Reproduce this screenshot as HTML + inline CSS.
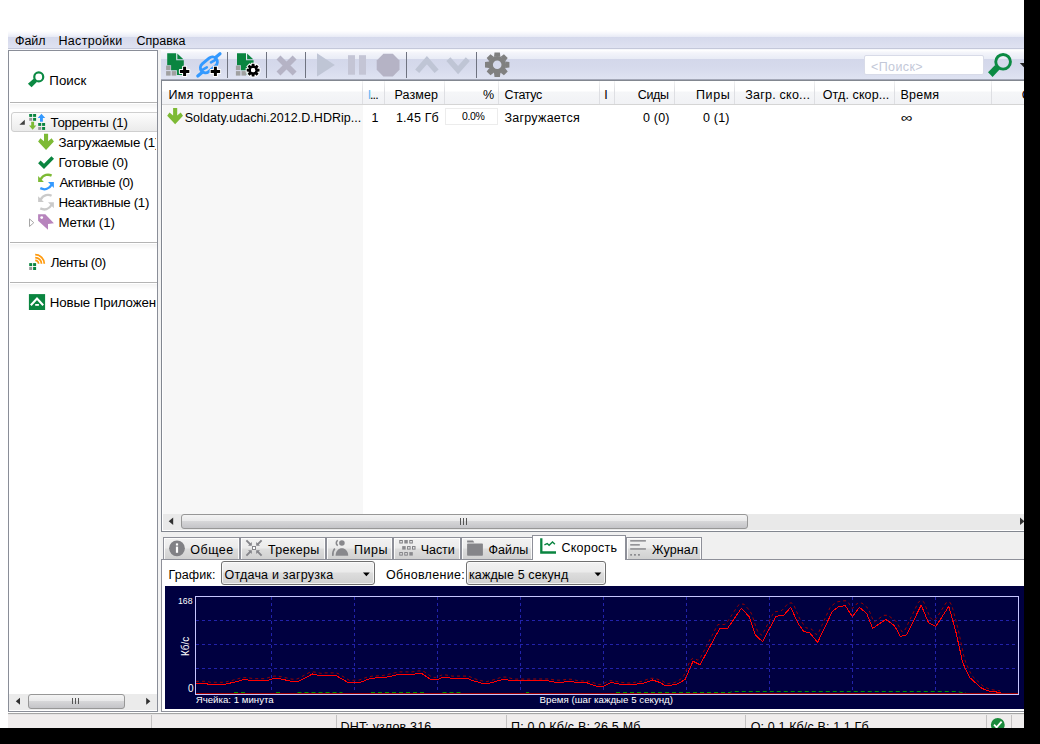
<!DOCTYPE html>
<html lang="ru"><head><meta charset="utf-8"><title>µTorrent</title>
<style>
html,body{margin:0;padding:0}
body{width:1040px;height:744px;background:#000;overflow:hidden;position:relative;font-family:"Liberation Sans",sans-serif}
#win{position:absolute;left:0;top:0;width:1024px;height:728px;background:#fff;overflow:hidden}
#win div,#win svg,#win span{position:absolute}
.t{z-index:5;white-space:nowrap;line-height:16px;color:#000}
#menubar{left:8px;top:31px;width:1016px;height:19px;background:linear-gradient(#ffffff 0,#f4f5fb 3px,#e7eaf5 6px,#d5d9ec 6px,#dfe2f1 17px,#c4c8da 17px,#c4c8da 18px,#f6f7fb 18px,#f6f7fb 19px)}
#side{left:8px;top:50px;width:148px;height:660px;border:1px solid #8a8e98;background:#fff;overflow:hidden}
#split{left:158px;top:50px;width:3px;height:662px;background:#f3f3f3}
#toolbar{left:161px;top:50px;width:863px;height:30px;background:linear-gradient(#ffffff 0,#f3f4fa 3px,#e9ecf6 8.6px,#d3d7ea 8.6px,#d6daec 18px,#dfe3f2 29px,#a4a8b8 29px,#a4a8b8 30px)}
.tsep{width:1px;top:2px;height:26px;background:#6f7380}
#list{left:161px;top:80px;width:863px;height:450px;border-left:1px solid #828790;border-top:1px solid #828790;border-bottom:1px solid #828790;background:#fff;overflow:hidden}
#lhead{left:0;top:0;width:863px;height:23px;background:linear-gradient(#fff 0,#fff 10px,#f5f6f8 11px,#f1f2f5 23px);border-bottom:1px solid #d5d5d5}
.csep{top:0;width:1px;height:23px;background:linear-gradient(#f2f2f2,#dedfe3 40%,#dedfe3)}
#sortcol{left:1px;top:24px;width:200px;height:409px;background:#f7f7f7}
#hscroll{left:1px;top:433px;width:862px;height:16px;background:#e9e9e9}
.thumb{border:1px solid #979797;border-radius:3px;background:linear-gradient(#f4f4f4 0,#e9e9ea 45%,#d6d6d8 50%,#c4c4c8 100%);box-sizing:border-box}
#tabstrip{left:161px;top:532px;width:863px;height:27px;background:#f0f0f0}
.tab{box-sizing:border-box;top:537px;height:22px;border:1px solid #8e9099;border-bottom:none;background:linear-gradient(#f2f2f2 0,#ebebeb 10px,#dddddd 11px,#cfcfcf 22px);box-shadow:inset 1px 1px 0 rgba(255,255,255,.85),inset -1px 0 0 rgba(255,255,255,.85)}
.tab.act{top:535px;height:25px;background:#fff;z-index:3;box-shadow:none}
#panel{left:161px;top:559px;width:863px;height:151px;border-left:1px solid #8e9099;border-top:1px solid #8e9099;border-bottom:1px solid #8e9099;background:#fff;box-sizing:content-box}
.combo{box-sizing:border-box;top:561px;height:24px;border:1px solid #707070;border-radius:3px;background:linear-gradient(#f2f2f2 0,#ebebeb 10px,#dddddd 11px,#cfcfcf 23px);box-shadow:inset 0 0 0 1px rgba(255,255,255,.7)}
#graph{left:165px;top:586px}
#statline{left:8px;top:713px;width:1016px;height:2px;background:linear-gradient(#a5a5a5 0,#a5a5a5 1px,#e6e4e4 1px)}
#status{left:8px;top:715px;width:1016px;height:13px;background:#f0eded}
.ssep{top:715px;width:1px;height:13px;background:#c4c2c2}
.hl{height:1px;background:#b4b4b4;left:1px;width:147px}
.hlg{height:6px;left:1px;width:147px;background:linear-gradient(#f3f3f3,#fff)}

</style></head>
<body>
<div id="win">
<div id="menubar"></div>
<div id="side">
  <div class="hl" style="top:51px"></div><div class="hlg" style="top:53px"></div>
  <div id="selrow" style="left:2px;top:61px;width:160px;height:18px;border:1px solid #cfcfcf;border-radius:3px;background:linear-gradient(#fdfdfd,#ebebeb)"></div>
  <div class="hl" style="top:191px"></div><div class="hlg" style="top:193px"></div>
  <div class="hl" style="top:231px"></div><div class="hlg" style="top:233px"></div>
  <div id="sscroll" style="left:0;top:643px;width:148px;height:16px;background:#ebebeb"></div>
  <div class="thumb" style="left:19px;top:643px;width:97px;height:15px"></div>
</div>
<div id="split"></div>
<div id="toolbar">
  <div class="tsep" style="left:66px"></div>
  <div class="tsep" style="left:105px"></div>
  <div class="tsep" style="left:144px"></div>
  <div class="tsep" style="left:245px"></div>
  <div class="tsep" style="left:315px"></div>
  <div id="sbox" style="left:703px;top:5px;width:120px;height:20px;box-sizing:border-box;border:1px solid #d8dbe8;border-radius:2px;background:#fff"></div>
</div>
<div id="list">
  <div id="sortcol"></div>
  <div id="lhead"></div>
  <div class="csep" style="left:200px"></div>
  <div class="csep" style="left:222px"></div>
  <div class="csep" style="left:282px"></div>
  <div class="csep" style="left:336px"></div>
  <div class="csep" style="left:437px"></div>
  <div class="csep" style="left:452px"></div>
  <div class="csep" style="left:512px"></div>
  <div class="csep" style="left:572px"></div>
  <div class="csep" style="left:652px"></div>
  <div class="csep" style="left:732px"></div>
  <div class="csep" style="left:829px"></div>
  <div id="pbox" style="left:283px;top:27px;width:53px;height:17px;box-sizing:border-box;border:1px solid #ececec;background:#fff"></div>
  <div id="hscroll"></div>
  <div class="thumb" style="left:19px;top:433px;width:567px;height:15px"></div>
</div>
<div id="tabstrip"></div>
<div id="panel"></div>
<div class="tab" style="left:163px;width:77px"></div>
<div class="tab" style="left:240px;width:86px"></div>
<div class="tab" style="left:326px;width:67px"></div>
<div class="tab" style="left:393px;width:68px"></div>
<div class="tab" style="left:461px;width:72px"></div>
<div class="tab" style="left:626px;width:76px"></div>
<div class="tab act" style="left:532px;width:94px"></div>
<div class="combo" style="left:221px;width:154px"></div>
<div class="combo" style="left:466px;width:140px"></div>
<svg id="graph" width="859" height="123" viewBox="165 586 859 123">
<rect x="165" y="586" width="859" height="123" fill="#000040"/>
<g stroke="#2222aa" stroke-width="1" stroke-dasharray="3 3" shape-rendering="crispEdges"><line x1="271.5" y1="597" x2="271.5" y2="694"/><line x1="354.5" y1="597" x2="354.5" y2="694"/><line x1="437.5" y1="597" x2="437.5" y2="694"/><line x1="520.5" y1="597" x2="520.5" y2="694"/><line x1="603.5" y1="597" x2="603.5" y2="694"/><line x1="686.5" y1="597" x2="686.5" y2="694"/><line x1="769.5" y1="597" x2="769.5" y2="694"/><line x1="852.5" y1="597" x2="852.5" y2="694"/><line x1="935.5" y1="597" x2="935.5" y2="694"/><line x1="196" y1="620.5" x2="1018" y2="620.5"/><line x1="196" y1="644.5" x2="1018" y2="644.5"/><line x1="196" y1="668.5" x2="1018" y2="668.5"/></g>
<rect x="195.5" y="596.5" width="823" height="97.5" fill="none" stroke="#c6c6ff" stroke-width="1" shape-rendering="crispEdges"/>
<path d="M234 692.5H246M276 692.5H281M297.5 692.5H342.5M371 692.5H426M442.5 692.5H461M526 692.5H529M616 692.5H730L732 691.5H958L961 692.5H966" stroke="#009000" stroke-width="1" stroke-dasharray="4 3" fill="none"/>
<line x1="196" y1="693.5" x2="1018" y2="693.5" stroke="#a00000" stroke-width="1" shape-rendering="crispEdges"/>
<polyline points="196.0,681.3 198.0,681.3 200.0,681.3 202.0,681.3 204.0,681.3 206.0,681.3 208.0,681.7 210.0,682.3 212.0,682.3 214.0,682.3 216.0,682.3 218.0,682.3 220.0,682.3 222.0,682.3 224.0,682.3 226.0,681.8 228.0,681.4 230.0,680.9 232.0,680.5 234.0,679.9 236.0,679.4 238.0,678.8 240.0,678.2 242.0,677.6 244.0,677.6 246.0,677.6 248.0,677.9 250.0,678.1 252.0,678.4 254.0,678.6 256.0,678.7 258.0,678.7 260.0,678.7 262.0,678.7 264.0,678.7 266.0,678.3 268.0,677.8 270.0,677.2 272.0,676.6 274.0,676.1 276.0,676.1 278.0,676.1 280.0,676.5 282.0,676.9 284.0,677.3 286.0,677.8 288.0,678.3 290.0,678.7 292.0,679.2 294.0,679.2 296.0,679.2 298.0,678.6 300.0,677.6 302.0,676.5 304.0,675.4 306.0,674.3 308.0,673.2 310.0,672.2 312.0,672.0 314.0,672.0 316.0,672.3 318.0,672.8 320.0,673.2 322.0,673.4 324.0,672.9 326.0,672.9 328.0,672.9 330.0,672.9 332.0,672.9 334.0,672.9 336.0,672.9 338.0,673.5 340.0,674.7 342.0,675.9 344.0,677.1 346.0,678.3 348.0,679.5 350.0,680.7 352.0,680.4 354.0,680.2 356.0,680.2 358.0,680.2 360.0,679.8 362.0,679.0 364.0,678.3 366.0,677.5 368.0,676.9 370.0,676.6 372.0,676.2 374.0,676.0 376.0,675.9 378.0,675.8 380.0,675.7 382.0,675.6 384.0,675.3 386.0,674.9 388.0,674.4 390.0,673.9 392.0,673.5 394.0,673.0 396.0,672.6 398.0,672.1 400.0,671.9 402.0,671.9 404.0,671.9 406.0,671.9 408.0,671.9 410.0,671.9 412.0,671.9 414.0,671.7 416.0,671.4 418.0,671.0 420.0,670.9 422.0,670.9 424.0,671.6 426.0,672.9 428.0,674.3 430.0,675.7 432.0,677.1 434.0,677.4 436.0,677.4 438.0,676.6 440.0,675.8 442.0,675.0 444.0,675.0 446.0,675.0 448.0,675.4 450.0,675.7 452.0,676.1 454.0,676.1 456.0,676.1 458.0,676.1 460.0,676.1 462.0,676.1 464.0,676.1 466.0,676.1 468.0,676.1 470.0,676.8 472.0,677.6 474.0,678.4 476.0,679.2 478.0,679.7 480.0,680.3 482.0,680.9 484.0,681.4 486.0,681.7 488.0,681.3 490.0,680.8 492.0,680.3 494.0,679.6 496.0,679.0 498.0,678.4 500.0,677.7 502.0,677.1 504.0,677.1 506.0,677.1 508.0,677.6 510.0,678.1 512.0,678.6 514.0,679.1 516.0,679.1 518.0,679.1 520.0,679.1 522.0,679.1 524.0,679.1 526.0,679.1 528.0,679.1 530.0,679.1 532.0,679.1 534.0,679.0 536.0,679.0 538.0,679.0 540.0,679.0 542.0,679.0 544.0,679.0 546.0,679.0 548.0,679.0 550.0,679.1 552.0,679.5 554.0,679.8 556.0,680.2 558.0,680.2 560.0,680.2 562.0,680.2 564.0,679.8 566.0,679.4 568.0,679.2 570.0,679.2 572.0,679.4 574.0,679.8 576.0,680.3 578.0,680.7 580.0,680.8 582.0,680.9 584.0,681.0 586.0,681.1 588.0,681.2 590.0,681.4 592.0,682.2 594.0,682.9 596.0,683.6 598.0,684.4 600.0,684.4 602.0,684.4 604.0,683.3 606.0,682.3 608.0,681.3 610.0,680.7 612.0,680.7 614.0,680.9 616.0,681.3 618.0,681.7 620.0,682.1 622.0,682.4 624.0,682.6 626.0,682.8 628.0,683.0 630.0,683.0 632.0,682.7 634.0,682.4 636.0,682.2 638.0,681.9 640.0,681.6 642.0,681.3 644.0,680.5 646.0,679.8 648.0,679.1 650.0,678.3 652.0,678.3 654.0,678.3 656.0,678.7 658.0,679.4 660.0,680.0 662.0,680.7 664.0,682.0 666.0,683.2 668.0,683.7 670.0,683.3 672.0,682.9 674.0,682.6 676.0,682.0 678.0,680.7 680.0,679.5 682.0,678.2 684.0,675.3 686.0,670.5 688.0,665.8 690.0,661.1 692.0,658.7 694.0,658.7 696.0,659.2 698.0,660.3 700.0,658.5 702.0,654.7 704.0,650.9 706.0,647.0 708.0,643.2 710.0,639.4 712.0,635.6 714.0,631.7 716.0,627.9 718.0,624.5 720.0,624.5 722.0,624.5 724.0,624.5 726.0,623.9 728.0,620.8 730.0,617.8 732.0,614.7 734.0,611.7 736.0,608.6 738.0,605.6 740.0,604.1 742.0,604.1 744.0,604.2 746.0,606.4 748.0,608.7 750.0,611.0 752.0,614.9 754.0,621.1 756.0,627.3 758.0,632.0 760.0,633.9 762.0,635.3 764.0,631.4 766.0,627.5 768.0,623.6 770.0,619.7 772.0,615.8 774.0,611.9 776.0,611.6 778.0,611.4 780.0,611.1 782.0,610.4 784.0,608.1 786.0,605.8 788.0,603.5 790.0,603.0 792.0,603.0 794.0,605.4 796.0,610.1 798.0,614.8 800.0,619.2 802.0,622.2 804.0,625.2 806.0,627.8 808.0,628.2 810.0,628.7 812.0,629.4 814.0,631.9 816.0,634.5 818.0,633.8 820.0,629.4 822.0,625.1 824.0,620.7 826.0,616.4 828.0,612.0 830.0,607.7 832.0,605.6 834.0,604.0 836.0,602.3 838.0,601.7 840.0,601.4 842.0,601.0 844.0,600.8 846.0,600.8 848.0,601.9 850.0,605.2 852.0,608.5 854.0,607.3 856.0,604.5 858.0,603.1 860.0,603.1 862.0,603.1 864.0,604.8 866.0,606.6 868.0,608.3 870.0,612.5 872.0,617.6 874.0,622.1 876.0,620.7 878.0,619.2 880.0,617.8 882.0,616.3 884.0,615.3 886.0,615.3 888.0,615.3 890.0,616.8 892.0,618.3 894.0,619.8 896.0,621.2 898.0,624.6 900.0,628.3 902.0,631.9 904.0,631.4 906.0,628.0 908.0,623.8 910.0,619.6 912.0,615.4 914.0,611.2 916.0,607.0 918.0,602.9 920.0,600.8 922.0,600.8 924.0,602.3 926.0,607.3 928.0,612.3 930.0,617.3 932.0,619.4 934.0,620.4 936.0,618.9 938.0,615.7 940.0,612.5 942.0,609.3 944.0,606.1 946.0,602.9 948.0,602.3 950.0,602.3 952.0,606.1 954.0,613.5 956.0,621.0 958.0,628.6 960.0,638.0 962.0,647.5 964.0,656.9 966.0,663.0 968.0,667.5 970.0,671.9 972.0,675.8 974.0,677.7 976.0,679.6 978.0,681.4 980.0,683.3 982.0,685.2 984.0,686.9 986.0,687.7 988.0,688.5 990.0,689.2 992.0,689.7 994.0,690.0 996.0,690.3 998.0,690.5 1000.0,690.8" fill="none" stroke="#960000" stroke-width="1" stroke-dasharray="3 3"/>
<polyline points="196.0,683.0 205.0,683.0 207.5,684.0 226.0,684.0 235.0,682.0 244.0,679.5 252.5,680.5 262.5,680.5 265.0,681.0 276.0,678.0 281.0,679.0 290.0,681.0 299.0,681.0 312.5,674.0 321.0,676.0 326.0,675.0 335.0,675.0 349.0,683.0 355.0,682.0 361.0,682.0 369.0,679.0 375.0,678.0 385.0,677.5 401.0,674.0 415.0,674.0 421.0,673.0 430.0,679.0 436.0,680.0 444.0,677.0 450.0,678.0 466.0,678.0 474.0,681.0 485.0,684.0 492.5,682.5 504.0,679.0 512.5,681.0 547.5,680.8 554.0,682.0 564.0,682.0 569.0,681.0 576.0,682.5 587.5,683.0 596.0,686.0 604.0,686.0 611.0,682.5 619.0,684.0 630.0,685.0 644.0,683.0 652.5,680.0 660.0,682.5 666.0,686.0 677.5,684.0 685.0,679.5 693.0,661.3 700.0,664.8 719.8,628.4 727.6,628.4 741.4,608.2 749.2,616.8 755.3,635.0 762.5,641.6 776.0,616.3 783.5,615.4 790.8,607.3 797.7,622.9 803.7,631.5 809.8,632.9 817.6,642.4 832.3,611.6 838.4,606.8 845.3,605.6 852.4,616.8 859.4,607.3 866.6,613.4 872.7,628.4 885.7,619.4 894.3,625.5 900.4,636.4 906.4,635.0 921.2,605.2 928.6,622.9 935.9,626.3 948.8,606.4 955.8,631.5 962.7,662.7 969.6,677.4 981.7,688.3 988.6,690.9 1000.8,692.6" fill="none" stroke="#ff0000" stroke-width="1" shape-rendering="crispEdges"/>
<g font-family="'Liberation Sans',sans-serif" fill="#fff" font-size="10px">
<text x="178" y="604.3" font-size="9.6px" textLength="14.5" lengthAdjust="spacingAndGlyphs">168</text>
<text x="188" y="692">0</text>
<text transform="translate(189.3,656) rotate(-90)" textLength="19.4" lengthAdjust="spacingAndGlyphs">Кб/с</text>
<text x="195.7" y="702.8" font-size="9.9px" textLength="78" lengthAdjust="spacingAndGlyphs">Ячейка: 1 минута</text>
<text x="539.6" y="702.8" font-size="9.9px" textLength="133.4" lengthAdjust="spacingAndGlyphs">Время (шаг каждые 5 секунд)</text>
</g>
</svg><svg id="icons" width="1024" height="728" viewBox="0 0 1024 728" style="left:0;top:0;z-index:4">
<path d="M167.2 53.3H176.2V60.3H183.8V75H176.9V70.2H171.1V65.2H167.2Z" fill="#0a8540"/>
<path d="M177.3 53.4V59.3H183.4Z" fill="#0a8540"/>
<rect x="166.1" y="65.6" width="4.5" height="4.5" fill="#a0a0a0"/>
<rect x="166.1" y="71.1" width="4.5" height="4.5" fill="#a0a0a0"/>
<rect x="171.7" y="71.1" width="4.5" height="4.5" fill="#a0a0a0"/>
<path d="M183.1 66.7h3v3.2h3.2v3h-3.2v3.2h-3v-3.2h-3.2v-3h3.2z" fill="#000" stroke="#fff" stroke-width="2" stroke-linejoin="round" paint-order="stroke"/>
<g stroke="#3399ff" fill="none" stroke-linecap="round"><rect x="199.4" y="59.9" width="19" height="10" rx="5" transform="rotate(-40 208.9 64.9)" stroke-width="3"/><path d="M215.8 57.2L220 53.8M202 72.6L197.8 76" stroke-width="3.2"/><path d="M215 60.2L211 62.4M202.8 69.6L206.8 67.4" stroke-width="2.6"/></g>
<path d="M213.9 66.7h3v3.2h3.2v3h-3.2v3.2h-3v-3.2h-3.2v-3h3.2z" fill="#000" stroke="#fff" stroke-width="2" stroke-linejoin="round" paint-order="stroke"/>
<path d="M237.0 53.3H246.0V60.3H253.60000000000002V75H246.7V70.2H240.89999999999998V65.2H237.0Z" fill="#0a8540"/>
<path d="M247.10000000000002 53.4V59.3H253.2Z" fill="#0a8540"/>
<rect x="235.89999999999998" y="65.6" width="4.5" height="4.5" fill="#a0a0a0"/>
<rect x="235.89999999999998" y="71.1" width="4.5" height="4.5" fill="#a0a0a0"/>
<rect x="241.5" y="71.1" width="4.5" height="4.5" fill="#a0a0a0"/>
<path d="M256.90 71.80 L259.50 71.54 L259.50 68.86 L256.90 68.60Z M254.66 74.02 L256.68 75.68 L258.58 73.78 L256.92 71.76Z M251.50 74.00 L251.76 76.60 L254.44 76.60 L254.70 74.00Z M249.28 71.76 L247.62 73.78 L249.52 75.68 L251.54 74.02Z M249.30 68.60 L246.70 68.86 L246.70 71.54 L249.30 71.80Z M251.54 66.38 L249.52 64.72 L247.62 66.62 L249.28 68.64Z M254.70 66.40 L254.44 63.80 L251.76 63.80 L251.50 66.40Z M256.92 68.64 L258.58 66.62 L256.68 64.72 L254.66 66.38Z " fill="#fff" stroke="#fff" stroke-width="2"/>
<circle cx="253.1" cy="70.2" r="5.6" fill="#fff"/>
<path d="M256.90 71.80 L259.50 71.54 L259.50 68.86 L256.90 68.60Z M254.66 74.02 L256.68 75.68 L258.58 73.78 L256.92 71.76Z M251.50 74.00 L251.76 76.60 L254.44 76.60 L254.70 74.00Z M249.28 71.76 L247.62 73.78 L249.52 75.68 L251.54 74.02Z M249.30 68.60 L246.70 68.86 L246.70 71.54 L249.30 71.80Z M251.54 66.38 L249.52 64.72 L247.62 66.62 L249.28 68.64Z M254.70 66.40 L254.44 63.80 L251.76 63.80 L251.50 66.40Z M256.92 68.64 L258.58 66.62 L256.68 64.72 L254.66 66.38Z " fill="#000"/>
<circle cx="253.1" cy="70.2" r="3.3499999999999996" fill="none" stroke="#000" stroke-width="2.4999999999999996"/>
<circle cx="253.1" cy="70.2" r="2.1" fill="#fff"/>
<path d="M278.5 57.5L294.6 73.4M294.6 57.5L278.5 73.4" stroke="#b5b3c5" stroke-width="5.6" fill="none"/>
<path d="M317 53.3L334.8 64.9L317 76.5Z" fill="#bfc5d5"/>
<rect x="348" y="55.2" width="7" height="19.5" fill="#c4c5d5"/><rect x="359" y="55.2" width="7" height="19.5" fill="#c4c5d5"/>
<polygon points="399.5,69.8 392.8,76.5 383.4,76.5 376.7,69.8 376.7,60.4 383.4,53.7 392.8,53.7 399.5,60.4" fill="#b5b3c5"/>
<path d="M417.2 71.2L426.9 60.2L436.6 71.2" stroke="#bfc5d5" stroke-width="5.4" fill="none"/>
<path d="M448.4 59.1L458.1 70.1L467.8 59.1" stroke="#bfc5d5" stroke-width="5.4" fill="none"/>
<path d="M505.30 68.00 L509.40 67.49 L509.40 62.11 L505.30 61.60Z M500.66 72.79 L503.93 75.33 L507.73 71.53 L505.19 68.26Z M494.00 72.90 L494.51 77.00 L499.89 77.00 L500.40 72.90Z M489.21 68.26 L486.67 71.53 L490.47 75.33 L493.74 72.79Z M489.10 61.60 L485.00 62.11 L485.00 67.49 L489.10 68.00Z M493.74 56.81 L490.47 54.27 L486.67 58.07 L489.21 61.34Z M500.40 56.70 L499.89 52.60 L494.51 52.60 L494.00 56.70Z M505.19 61.34 L507.73 58.07 L503.93 54.27 L500.66 56.81Z " fill="#808080"/>
<circle cx="497.2" cy="64.8" r="6.6" fill="none" stroke="#808080" stroke-width="4.6000000000000005"/>
<circle cx="1003.1" cy="61.8" r="7.35" fill="none" stroke="#0b8a43" stroke-width="2.9"/><path d="M995.2 65L999.6 69.6L992.6 77L988 72.2Z" fill="#0b8a43"/>
<path d="M1019.8 63H1028L1023.9 67.2Z" fill="#222"/>
<circle cx="38.75" cy="76.9" r="4.5" fill="none" stroke="#0b8a43" stroke-width="2.2"/><path d="M33.6 78.8L36.8 82L31.6 87.2L27.9 83.8Z" fill="#0b8a43"/>
<path d="M24.8 119.8V124.8H19.4Z" fill="#404040"/>
<rect x="29.2" y="114" width="3" height="2.9" fill="#0a8540"/>
<rect x="33.1" y="114" width="3" height="2.9" fill="#0a8540"/>
<rect x="29.2" y="117.9" width="3" height="2.9" fill="#999"/>
<rect x="33.1" y="117.9" width="3" height="2.9" fill="#0a8540"/>
<rect x="38.2" y="123" width="3" height="2.9" fill="#0a8540"/>
<rect x="42.1" y="123" width="3" height="2.9" fill="#0a8540"/>
<rect x="38.2" y="127" width="3" height="2.9" fill="#999"/>
<rect x="42.1" y="127" width="3" height="2.9" fill="#0a8540"/>
<path d="M31.2 121.8H34.1V125.6H36.3L32.65 129.8L29 125.6H31.2Z" fill="#7dba35"/>
<path d="M40 121.8H42.9V118H45.2L41.45 113.8L37.7 118H40Z" fill="#3399ff"/>
<path d="M44.00 133.80 L48.10 133.80 L48.10 141.20 L51.60 138.20 L53.90 141.60 L46.05 150.00 L38.10 141.60 L40.40 138.20 L44.00 141.20Z" fill="#7dba35"/>
<path d="M173.10 108.00 L177.20 108.00 L177.20 115.40 L180.70 112.40 L183.00 115.80 L175.15 124.20 L167.20 115.80 L169.50 112.40 L173.10 115.40Z" fill="#7dba35"/>
<path d="M38.1 163.2L40.6 160.6L44 163.8L51.4 156.2L54 158.8L44 169Z" fill="#0a8540"/>
<path d="M38.1 176V181.9H43.9Z" fill="#7dba35"/><path d="M40.6 179.4C43.5 174.2 48.5 174 51.6 175.6" stroke="#7dba35" stroke-width="2.4" fill="none"/>
<path d="M53.9 182V188L48 182Z" fill="#3399ff"/><path d="M40.3 188.2C44.5 190.2 49 189.4 51.6 184.6" stroke="#3399ff" stroke-width="2.4" fill="none"/>
<path d="M38.1 196.2V202.1H43.9Z" fill="#cacaca"/><path d="M40.6 199.6C43.5 194.39999999999998 48.5 194.2 51.6 195.79999999999998" stroke="#cacaca" stroke-width="2.4" fill="none"/>
<path d="M53.9 202.2V208.2L48 202.2Z" fill="#cacaca"/><path d="M40.3 208.39999999999998C44.5 210.39999999999998 49 209.6 51.6 204.79999999999998" stroke="#cacaca" stroke-width="2.4" fill="none"/>
<path d="M38.1 214.3H45.3L53.9 223.3L48 224.1V229.8L38.1 220.7Z" fill="#b784bd"/><circle cx="41.7" cy="217.6" r="1.4" fill="#fff"/>
<path d="M29.5 218.9L33.8 222.7L29.5 226.5Z" fill="#fff" stroke="#a6a6a6" stroke-width="1"/>
<rect x="29.2" y="263.1" width="3" height="3" fill="#0a8540"/>
<rect x="33.1" y="263.1" width="3" height="3" fill="#0a8540"/>
<rect x="29.2" y="267" width="3" height="3" fill="#999"/>
<rect x="33.1" y="267" width="3" height="3" fill="#0a8540"/>
<g fill="none" stroke="#ff9a0e" stroke-width="1.75"><path d="M35.2 260.4A3.4 3.4 0 0 1 38.6 263.8"/><path d="M35.2 257.5A6.3 6.3 0 0 1 41.5 263.8"/><path d="M35.2 254.7A9.1 9.1 0 0 1 44.3 263.8"/></g>
<rect x="28.9" y="294.1" width="16.2" height="15.9" fill="#0a8540"/><path d="M30.8 305.2L37 298.6L43.2 305.2" stroke="#fff" stroke-width="2.1" fill="none"/><rect x="35.2" y="304" width="3.7" height="1.8" fill="#fff"/>
<path d="M20 697.8V704.8L15.8 701.3Z" fill="#303030"/><path d="M146.2 697.8V704.8L150.4 701.3Z" fill="#303030"/>
<g stroke="#555" stroke-width="1" shape-rendering="crispEdges"><path d="M72.5 698V704M75.5 698V704M78.5 698V704"/><path d="M460.5 518V525M463.5 518V525M466.5 518V525"/></g>
<path d="M173.2 517.6V525L168.7 521.3Z" fill="#303030"/><path d="M1020 517.6V525L1024.5 521.3Z" fill="#303030"/>
<circle cx="177" cy="548.3" r="7.9" fill="#818185"/><rect x="175.9" y="546.6" width="2.2" height="6.2" fill="#fff"/><rect x="175.9" y="543.4" width="2.2" height="2.1" fill="#fff"/>
<g fill="#85858a" stroke="none"><path d="M251.8 545.8V541.9L248 545.8Z"/><path d="M256.2 545.8V541.9L260 545.8Z"/><path d="M251.8 550.2V554.1L248 550.2Z"/><path d="M256.2 550.2V554.1L260 550.2Z"/></g><g stroke="#85858a" stroke-width="1.9" fill="none"><path d="M246.4 540.4L250.6 544.6M261.6 540.4L257.4 544.6M246.4 555.6L250.6 551.4M261.6 555.6L257.4 551.4"/></g><rect x="252.5" y="546.5" width="3" height="3" fill="#fff" stroke="#85858a" stroke-width="1"/>
<g fill="#88888c"><circle cx="341.9" cy="543" r="2.8"/><path d="M335.6 555.8C335.6 545.8 348.2 545.8 348.2 555.8Z"/></g><g fill="none" stroke="#88888c" stroke-width="1.6"><path d="M337.8 540.4A3 3 0 0 0 337.8 545.6"/><path d="M334.8 548.4Q332.3 551.4 332.9 555.8"/></g>
<rect x="399.8" y="540.5" width="2.5" height="2.5" fill="#f4f4f4" stroke="#7c7c80" stroke-width="1"/>
<rect x="404.3" y="540" width="3.5" height="3.5" fill="#8a8a8e"/>
<rect x="409.8" y="540.5" width="2.5" height="2.5" fill="#f4f4f4" stroke="#7c7c80" stroke-width="1"/>
<rect x="402.2" y="546.1" width="3.5" height="3.5" fill="#8a8a8e"/>
<rect x="407.59999999999997" y="546.6" width="2.5" height="2.5" fill="#f4f4f4" stroke="#7c7c80" stroke-width="1"/>
<rect x="412.5" y="546.6" width="2.5" height="2.5" fill="#f4f4f4" stroke="#7c7c80" stroke-width="1"/>
<rect x="399.8" y="552.6" width="2.5" height="2.5" fill="#f4f4f4" stroke="#7c7c80" stroke-width="1"/>
<rect x="404.8" y="552.6" width="2.5" height="2.5" fill="#f4f4f4" stroke="#7c7c80" stroke-width="1"/>
<rect x="409.3" y="552.1" width="3.5" height="3.5" fill="#8a8a8e"/>
<path d="M467.1 540.4H473L474.3 542.6H467.1Z" fill="#858589"/><rect x="467.1" y="543.4" width="15.8" height="12.3" rx="0.8" fill="#858589"/>
<g stroke="#0a8540" fill="none" stroke-width="1.5"><path d="M541.3 538.3V552.5H556" stroke-width="2.3"/><path d="M544.4 544.8L547.2 543.5L549.1 545.3L552.5 541.9L554.9 544.2" stroke-width="1.4"/></g>
<g fill="#8a8a8e"><rect x="630.2" y="540.1" width="15.7" height="1.5"/><rect x="630.2" y="544.1" width="9.6" height="1.5"/><rect x="630.2" y="548.2" width="15.7" height="1.5"/><rect x="630.2" y="554" width="1.8" height="1.7"/><rect x="634" y="554" width="1.9" height="1.7"/><rect x="638" y="554" width="1.9" height="1.7"/></g>
<path d="M363 572.6H369.8L366.4 576.2Z" fill="#000"/><path d="M594.5 572.6H601.3L597.9 576.2Z" fill="#000"/>
<circle cx="997.8" cy="724.8" r="6.9" fill="#1b8a3c"/><path d="M994 724.6L996.6 727.4L1001.6 721.6" stroke="#fff" stroke-width="1.8" fill="none"/>
</svg>
<div id="statline"></div>
<div id="status"></div>
<div class="ssep" style="left:151px"></div>
<div class="ssep" style="left:336px"></div>
<div class="ssep" style="left:506px"></div>
<div class="ssep" style="left:745px"></div>
<div class="ssep" style="left:986px"></div>
<div class="ssep" style="left:1011px"></div>

<span class="t" style="left:15.10px;top:33px;font-size:12.5px;letter-spacing:-0.133px">Файл</span>
<span class="t" style="left:58.50px;top:33px;font-size:12.5px;letter-spacing:0.312px">Настройки</span>
<span class="t" style="left:136.50px;top:33px;font-size:12.5px;letter-spacing:-0.017px">Справка</span>
<span class="t" style="left:49.30px;top:73px;font-size:13.3px;letter-spacing:0.025px">Поиск</span>
<span class="t" style="left:50.50px;top:115px;font-size:13.3px;letter-spacing:-0.191px">Торренты (1)</span>
<span class="t" style="left:58.40px;top:135px;font-size:13.3px;letter-spacing:-0.214px;width:97.60px;overflow:hidden">Загружаемые (1)</span>
<span class="t" style="left:58.40px;top:155px;font-size:13.3px;letter-spacing:-0.100px">Готовые (0)</span>
<span class="t" style="left:59.40px;top:175px;font-size:13.3px;letter-spacing:-0.482px">Активные (0)</span>
<span class="t" style="left:58.40px;top:195px;font-size:13.3px;letter-spacing:-0.323px">Неактивные (1)</span>
<span class="t" style="left:58.40px;top:215px;font-size:13.3px;letter-spacing:-0.125px">Метки (1)</span>
<span class="t" style="left:50.70px;top:255px;font-size:13.3px;letter-spacing:-0.438px">Ленты (0)</span>
<span class="t" style="left:49.70px;top:295px;font-size:13.3px;letter-spacing:-0.113px;width:106.30px;overflow:hidden">Новые Приложения</span>
<span class="t" style="left:168.50px;top:87px;font-size:12.5px;letter-spacing:0.341px">Имя торрента</span>
<span class="t" style="left:367.80px;top:87px;font-size:12.5px;letter-spacing:0.000px;color:#62b4f4">I</span>
<span class="t" style="left:369.90px;top:87px;font-size:12.5px;letter-spacing:-0.750px">...</span>
<span class="t" style="left:1021.70px;top:87px;font-size:12.5px;letter-spacing:0.050px">Скачано</span>
<span class="t" style="left:394.50px;top:87px;font-size:12.5px;letter-spacing:0.100px">Размер</span>
<span class="t" style="left:483.00px;top:87px;font-size:12.5px;letter-spacing:0.000px">%</span>
<span class="t" style="left:504.50px;top:87px;font-size:12.5px;letter-spacing:-0.350px">Статус</span>
<span class="t" style="left:604.20px;top:87px;font-size:12.5px;letter-spacing:0.000px">I</span>
<span class="t" style="left:637.75px;top:87px;font-size:12.5px;letter-spacing:-0.333px">Сиды</span>
<span class="t" style="left:696.00px;top:87px;font-size:12.5px;letter-spacing:0.583px">Пиры</span>
<span class="t" style="left:745.25px;top:87px;font-size:12.5px;letter-spacing:0.227px">Загр. ско...</span>
<span class="t" style="left:822.80px;top:87px;font-size:12.5px;letter-spacing:0.095px">Отд. скор...</span>
<span class="t" style="left:900.50px;top:87px;font-size:12.5px;letter-spacing:0.250px">Время</span>
<span class="t" style="left:184.75px;top:110px;font-size:12.5px;letter-spacing:0.034px">Soldaty.udachi.2012.D.HDRip...</span>
<span class="t" style="left:371.50px;top:110px;font-size:12.5px;letter-spacing:0.000px">1</span>
<span class="t" style="left:396.00px;top:110px;font-size:12.5px;letter-spacing:0.167px">1.45 Гб</span>
<span class="t" style="left:462.00px;top:108px;font-size:10.5px;letter-spacing:-0.333px">0.0%</span>
<span class="t" style="left:504.50px;top:110px;font-size:12.5px;letter-spacing:0.250px">Загружается</span>
<span class="t" style="left:643.00px;top:110px;font-size:12.5px;letter-spacing:0.188px">0 (0)</span>
<span class="t" style="left:703.00px;top:110px;font-size:12.5px;letter-spacing:0.188px">0 (1)</span>
<span class="t" style="left:900.80px;top:110px;font-size:13px;letter-spacing:0.000px;transform:scaleX(1.24);transform-origin:0 0">∞</span>
<span class="t" style="left:871.00px;top:59px;font-size:12.5px;letter-spacing:0.383px;color:#c3c8d8">&lt;Поиск&gt;</span>
<span class="t" style="left:190.25px;top:542px;font-size:12.5px;letter-spacing:0.500px">Общее</span>
<span class="t" style="left:268.00px;top:542px;font-size:12.5px;letter-spacing:0.333px">Трекеры</span>
<span class="t" style="left:354.00px;top:542px;font-size:12.5px;letter-spacing:0.500px">Пиры</span>
<span class="t" style="left:420.75px;top:542px;font-size:12.5px;letter-spacing:-0.062px">Части</span>
<span class="t" style="left:488.50px;top:542px;font-size:12.5px;letter-spacing:0.000px">Файлы</span>
<span class="t" style="left:561.50px;top:540px;font-size:12.5px;letter-spacing:0.214px">Скорость</span>
<span class="t" style="left:652.00px;top:542px;font-size:12.5px;letter-spacing:0.100px">Журнал</span>
<span class="t" style="left:168.50px;top:567px;font-size:12.5px;letter-spacing:0.125px">График:</span>
<span class="t" style="left:224.50px;top:567px;font-size:12.5px;letter-spacing:0.219px">Отдача и загрузка</span>
<span class="t" style="left:386.00px;top:567px;font-size:12.5px;letter-spacing:0.300px">Обновление:</span>
<span class="t" style="left:469.00px;top:567px;font-size:12.5px;letter-spacing:0.125px">каждые 5 секунд</span>
<span class="t" style="left:340.50px;top:719px;font-size:12.5px;letter-spacing:0.177px">DHT: узлов 316</span>
<span class="t" style="left:511.00px;top:719px;font-size:12.5px;letter-spacing:0.210px">П: 0.0 Кб/с В: 26.5 Мб</span>
<span class="t" style="left:750.70px;top:719px;font-size:12.5px;letter-spacing:0.135px">О: 0.1 Кб/с В: 1.1 Гб</span>
</div>
</body></html>
